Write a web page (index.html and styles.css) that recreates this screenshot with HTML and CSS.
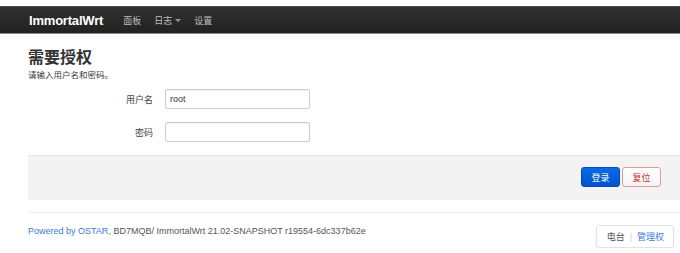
FILE: index.html
```html
<!doctype html>
<html lang="zh-CN">
 <head>
  <meta charset="UTF-8">
  <title>ImmortalWrt - 需要授权</title>
  <meta name="viewport" content="width=device-width, initial-scale=1.0">
  <link rel="stylesheet" href="styles.css">
 </head>
 <body>
  <header class="navbar">
   <a class="brand" href="#">ImmortalWrt</a>
   <nav class="menu">
    <a href="#">面板</a>
    <a href="#" class="dropdown">日志<span class="caret"></span></a>
    <a href="#">设置</a>
   </nav>
  </header>

  <main class="container">
   <h2 class="title">需要授权</h2>
   <p class="desc">请输入用户名和密码。</p>

   <div class="field">
    <label class="field-label" for="user">用户名</label>
    <input class="field-input" id="user" type="text" value="root">
   </div>
   <div class="field">
    <label class="field-label" for="pass">密码</label>
    <input class="field-input" id="pass" type="password">
   </div>

   <div class="actions">
    <button class="btn btn-primary">登录</button>
    <button class="btn btn-reset">复位</button>
   </div>

   <footer class="footer">
    <span class="footer-text"><a href="#">Powered by OSTAR</a>, BD7MQB/ ImmortalWrt 21.02-SNAPSHOT r19554-6dc337b62e</span>
    <span class="footer-links">
     <a href="#" class="plain">电台</a>
     <span class="sep">|</span>
     <a href="#">管理权</a>
    </span>
   </footer>
  </main>
 </body>
</html>
```

FILE: styles.css
```css
body {
  margin: 0;
  padding-top: 6px;
  background: #fff;
  font-family: "Liberation Sans", Arial, "Noto Sans CJK SC", sans-serif;
  color: #404040;
  overflow: hidden;
}

a {
  text-decoration: none;
}

/* top bar */
.navbar {
  display: flex;
  align-items: center;
  height: 26px;
  padding-left: 29px;
  background: linear-gradient(#303030, #222);
  border-top: 1px solid #4a4a4a;
  border-bottom: 1px solid #8a8a8a;
}

.brand {
  color: #fff;
  font-size: 13px;
  font-weight: bold;
  letter-spacing: -0.2px;
  margin-right: 20px;
}

.menu {
  display: flex;
  gap: 13px;
}

.menu a {
  color: #bdbdbd;
  font-size: 9px;
  display: flex;
  align-items: center;
}

.caret {
  display: inline-block;
  margin-left: 3px;
  border-top: 3px solid #999;
  border-left: 3px solid transparent;
  border-right: 3px solid transparent;
}

/* content */
.container {
  padding-left: 28px;
}

.title {
  margin: 14px 0 0;
  font-size: 16px;
  line-height: 20px;
  color: #333;
  font-weight: bold;
}

.desc {
  margin: 2px 0 0;
  font-size: 8.5px;
  line-height: 10px;
  color: #3a3a3a;
}

.field {
  display: flex;
  align-items: center;
  gap: 12px;
  margin-top: 9px;
}

.field + .field {
  margin-top: 13px;
}

.field-label {
  width: 125px;
  text-align: right;
  font-size: 9px;
  color: #444;
}

.field-input {
  box-sizing: border-box;
  width: 145px;
  height: 20px;
  margin: 0;
  padding: 0 4px;
  border: 1px solid #ccc;
  border-radius: 2px;
  font-family: inherit;
  font-size: 9px;
  color: #333;
  box-shadow: inset 0 1px 1px rgba(0, 0, 0, 0.05);
}

.actions {
  display: flex;
  justify-content: flex-end;
  gap: 2px;
  margin-top: 13px;
  padding: 11px 19px 0 0;
  box-sizing: border-box;
  height: 45px;
  background: #f3f3f3;
  border-top: 1px solid #e4e4e4;
}

.btn {
  box-sizing: border-box;
  width: 39px;
  height: 20px;
  padding: 0;
  border-radius: 3px;
  font-family: inherit;
  font-size: 9px;
  cursor: pointer;
}

.btn-primary {
  color: #fff;
  background: linear-gradient(#0a6be6, #0052cc);
  border: 1px solid #004bb8;
}

.btn-reset {
  color: #c9302c;
  background: linear-gradient(#fff, #f4f4f4);
  border: 1px solid #e39a9a;
}

/* footer */
.footer {
  display: flex;
  justify-content: space-between;
  align-items: flex-start;
  margin-top: 12px;
  padding: 12px 6px 0 0;
  border-top: 1px solid #eee;
  font-size: 9px;
}

.footer-text {
  color: #555;
  line-height: 11px;
  margin-top: 1px;
}

.footer a {
  color: #3a7bd5;
}

.footer-links {
  display: flex;
  align-items: center;
  gap: 5px;
  height: 21px;
  padding: 0 9px 0 10px;
  border: 1px solid #e2e2e2;
  border-radius: 3px;
  box-shadow: 0 1px 2px rgba(0, 0, 0, 0.08);
}

.footer-links .plain {
  color: #555;
}

.sep {
  color: #ccc;
}
```
